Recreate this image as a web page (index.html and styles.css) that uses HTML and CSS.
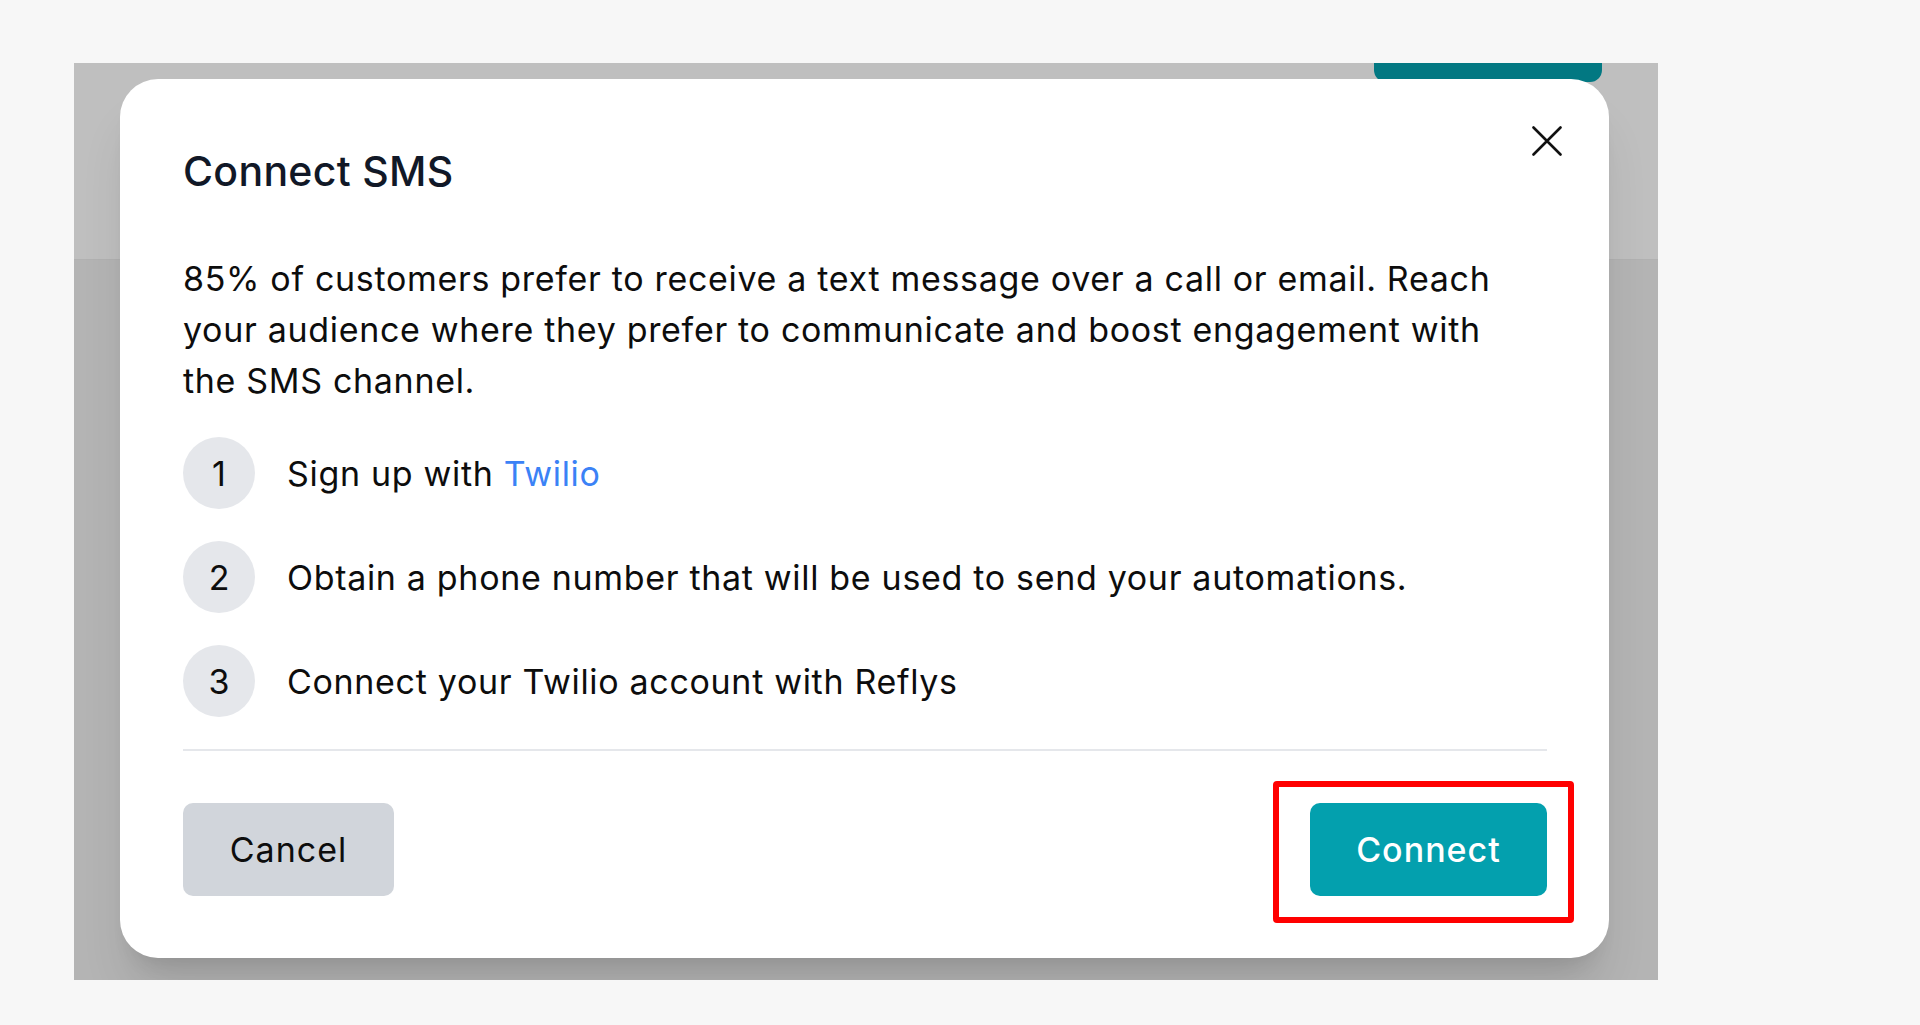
FILE: index.html
```html
<!DOCTYPE html>
<html lang="en">
<head>
    <meta charset="UTF-8">
    <meta name="viewport" content="width=device-width, initial-scale=1.0">
    <title>Connect SMS</title>
    <link rel="stylesheet" href="styles.css">
</head>
<body>

<div class="frame">
    <!-- Page behind the dialog -->
    <div class="page-header">
        <div class="header-btn"></div>
    </div>
    <div class="page-body"></div>

    <!-- Dialog overlay -->
    <div class="overlay">
        <div class="modal">
            <button class="close-btn" aria-label="Close">
                <svg width="30" height="30" viewBox="0 0 30 30">
                    <path d="M1.5 1.5 L28.5 28.5 M28.5 1.5 L1.5 28.5" stroke="#111" stroke-width="2.6" stroke-linecap="round" fill="none"/>
                </svg>
            </button>

            <h2 class="modal-title">Connect SMS</h2>

            <p class="modal-text">85% of customers prefer to receive a text message over a call or email. Reach your audience where they prefer to communicate and boost engagement with the SMS channel.</p>

            <ul class="steps">
                <li class="step">
                    <span class="step-num">1</span>
                    <span class="step-text">Sign up with <a href="#" class="link">Twilio</a></span>
                </li>
                <li class="step">
                    <span class="step-num">2</span>
                    <span class="step-text">Obtain a phone number that will be used to send your automations.</span>
                </li>
                <li class="step">
                    <span class="step-num">3</span>
                    <span class="step-text">Connect your Twilio account with Reflys</span>
                </li>
            </ul>

            <div class="modal-footer">
                <button class="btn btn-cancel">Cancel</button>
                <div class="highlight">
                    <button class="btn btn-connect">Connect</button>
                </div>
            </div>
        </div>
    </div>
</div>

</body>
</html>
```

FILE: styles.css
```css
* {
    box-sizing: border-box;
}
body {
    margin: 0;
    padding: 63px 0 0 74px;
    background-color: #f7f7f7;
    font-family: Inter, "Noto Sans", sans-serif;
    color: #0d0d0d;
    height: 1025px;
    overflow: hidden;
}
.frame {
    position: relative;
    width: 1584px;
    height: 917px;
    overflow: hidden;
    display: flex;
    flex-direction: column;
    background: #f1f1f1;
}
.page-header {
    height: 197px;
    background: #fff;
    border-bottom: 1px solid #ececec;
    display: flex;
    justify-content: flex-end;
    align-items: flex-start;
    padding-right: 56px;
}
.header-btn {
    width: 228px;
    height: 60px;
    margin-top: -41px;
    border-radius: 12px;
    background: #03a0ae;
}
.page-body {
    flex: 1;
}
.overlay {
    position: absolute;
    inset: 0;
    background: rgba(0, 0, 0, 0.25);
    display: flex;
    justify-content: center;
    align-items: flex-start;
    padding: 16px 3px 0 0;
}
.modal {
    position: relative;
    width: 1489px;
    height: 879px;
    background: #fff;
    border-radius: 38px;
    padding: 64px 62px 62px 63px;
    box-shadow: 0 40px 50px -10px rgba(0, 0, 0, 0.12), 0 16px 20px -12px rgba(0, 0, 0, 0.1);
    display: flex;
    flex-direction: column;
}
.close-btn {
    position: absolute;
    top: 47px;
    right: 47px;
    width: 30px;
    height: 30px;
    padding: 0;
    border: none;
    background: none;
    cursor: pointer;
}
.close-btn svg {
    display: block;
}
.modal-title {
    margin: 0;
    font-size: 41px;
    line-height: 56px;
    font-weight: 500;
    letter-spacing: 0.3px;
    color: #111827;
}
.modal-text {
    max-width: 1340px;
    margin: 54px 0 0;
    font-size: 34px;
    line-height: 51px;
    letter-spacing: 0.02em;
}
.steps {
    list-style: none;
    margin: 31px 0 0;
    padding: 0 0 32px;
    display: flex;
    flex-direction: column;
    gap: 32px;
    border-bottom: 2px solid #e5e7eb;
}
.step {
    display: flex;
    align-items: center;
    gap: 32px;
}
.step-num {
    width: 72px;
    height: 72px;
    flex-shrink: 0;
    border-radius: 50%;
    background: #e5e7eb;
    display: flex;
    align-items: center;
    justify-content: center;
    font-size: 34px;
}
.step-text {
    font-size: 34px;
    line-height: 51px;
    letter-spacing: 0.02em;
}
.link {
    color: #3b82f6;
    text-decoration: none;
}
.modal-footer {
    margin-top: auto;
    display: flex;
    justify-content: space-between;
    align-items: center;
}
.btn {
    height: 93px;
    padding: 0;
    border: none;
    border-radius: 10px;
    font-family: inherit;
    font-size: 34px;
    line-height: 51px;
    letter-spacing: 0.03em;
    cursor: pointer;
}
.btn-cancel {
    width: 211px;
    background: #d1d5db;
    color: #0d0d0d;
}
.btn-connect {
    width: 237px;
    background: #03a0ae;
    color: #fff;
    font-weight: 500;
}
.highlight {
    position: relative;
}
.highlight::after {
    content: "";
    position: absolute;
    left: -37px;
    right: -27px;
    top: -22px;
    bottom: -27px;
    border: 6px solid #ff0000;
    border-radius: 4px;
    pointer-events: none;
}
```
